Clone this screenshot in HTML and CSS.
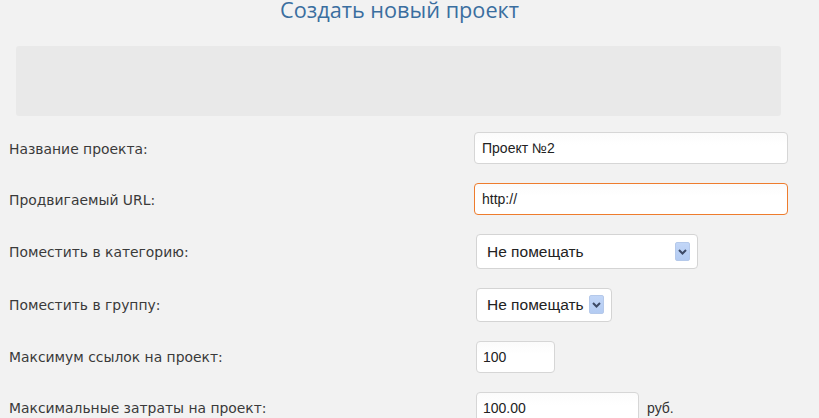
FILE: index.html
```html
<!DOCTYPE html>
<html lang="ru">
<head>
<meta charset="utf-8">
<title>Создать новый проект</title>
<link rel="stylesheet" href="styles.css">
</head>
<body>
<div class="page">
  <h1 class="title">Создать новый проект</h1>
  <div class="notice"></div>
  <form class="form">
    <div class="row r1">
      <label class="label">Название проекта:</label>
      <div class="control"><div class="input wide">Проект №2</div></div>
    </div>
    <div class="row r2">
      <label class="label">Продвигаемый URL:</label>
      <div class="control"><div class="input wide focus">http://</div></div>
    </div>
    <div class="row r3">
      <label class="label">Поместить в категорию:</label>
      <div class="control">
        <div class="select sel-cat"><span class="sel-text">Не помещать</span><span class="arrow"><svg width="9" height="6" viewBox="0 0 9 6"><path d="M1 1 L4.5 4.5 L8 1" fill="none" stroke="#3d4a66" stroke-width="2"/></svg></span></div>
      </div>
    </div>
    <div class="row r4">
      <label class="label">Поместить в группу:</label>
      <div class="control">
        <div class="select sel-grp"><span class="sel-text">Не помещать</span><span class="arrow"><svg width="9" height="6" viewBox="0 0 9 6"><path d="M1 1 L4.5 4.5 L8 1" fill="none" stroke="#3d4a66" stroke-width="2"/></svg></span></div>
      </div>
    </div>
    <div class="row r5">
      <label class="label">Максимум ссылок на проект:</label>
      <div class="control shift"><div class="input small">100</div></div>
    </div>
    <div class="row r6">
      <label class="label">Максимальные затраты на проект:</label>
      <div class="control shift"><div class="input medium">100.00</div><span class="unit">руб.</span></div>
    </div>
  </form>
</div>
</body>
</html>
```
FILE: styles.css
```css
html, body {
  margin: 0;
  padding: 0;
  background: #f2f2f2;
  overflow: hidden;
}
.page {
  width: 819px;
  height: 418px;
  font-family: "Liberation Sans", Arial, sans-serif;
  color: #333;
}
.title {
  margin: 0;
  height: 46px;
  text-align: center;
  padding-right: 20px;
  font-family: "Open Sans", "Noto Sans", sans-serif;
  font-weight: 400;
  font-size: 21.7px;
  line-height: 19px;
  padding-top: 0;
  color: #3a6e9f;
}
.notice {
  margin-left: 16px;
  width: 765px;
  height: 70px;
  background: #e9e9e9;
  border-radius: 3px;
}
.form {
  padding-top: 7px;
}
.row {
  display: grid;
  grid-template-columns: 474px 1fr;
  align-items: center;
  height: 51px;
}
.r1 { height: 50px; }
.r2 { height: 52px; }
.r3 { height: 53px; }
.r4 { height: 53px; }
.label {
  padding-left: 9px;
  padding-top: 1px;
  font-family: "DejaVu Sans", Verdana, sans-serif;
  font-size: 13.9px;
  color: #3a3a3a;
}
.control {
  display: flex;
  align-items: center;
}
.control.shift { padding-left: 2px; }
.input {
  box-sizing: border-box;
  height: 32px;
  background: linear-gradient(#fbfbfb, #ffffff 40%);
  border: 1px solid #d6d6d6;
  border-radius: 4px;
  padding-left: 7px;
  font-size: 14px;
  line-height: 30px;
  color: #222;
}
.input.wide { width: 314px; }
.input.focus { border-color: #ee7c2d; }
.input.small { width: 79px; padding-left: 6px; }
.input.medium { width: 163px; padding-left: 6px; }
.unit {
  margin-left: 8px;
  font-size: 14px;
  color: #333;
}
.select {
  box-sizing: border-box;
  height: 35px;
  background: #fff;
  border: 1px solid #d4d4d4;
  border-radius: 4px;
  margin-left: 2px;
  display: flex;
  align-items: center;
  padding-left: 10px;
  font-size: 15.5px;
  color: #222;
}
.sel-cat { width: 222px; }
.sel-cat .sel-text { flex: 1; }
.sel-grp { width: 136px; height: 34px; }
.sel-grp .sel-text { margin-right: 5px; }
.arrow {
  box-sizing: border-box;
  width: 15px;
  height: 19px;
  margin-right: 7px;
  background: linear-gradient(#c2d6f7, #b3cbf2);
  border: 1px solid #b5c9ea;
  border-radius: 2px;
  display: flex;
  align-items: center;
  justify-content: center;
}
```
